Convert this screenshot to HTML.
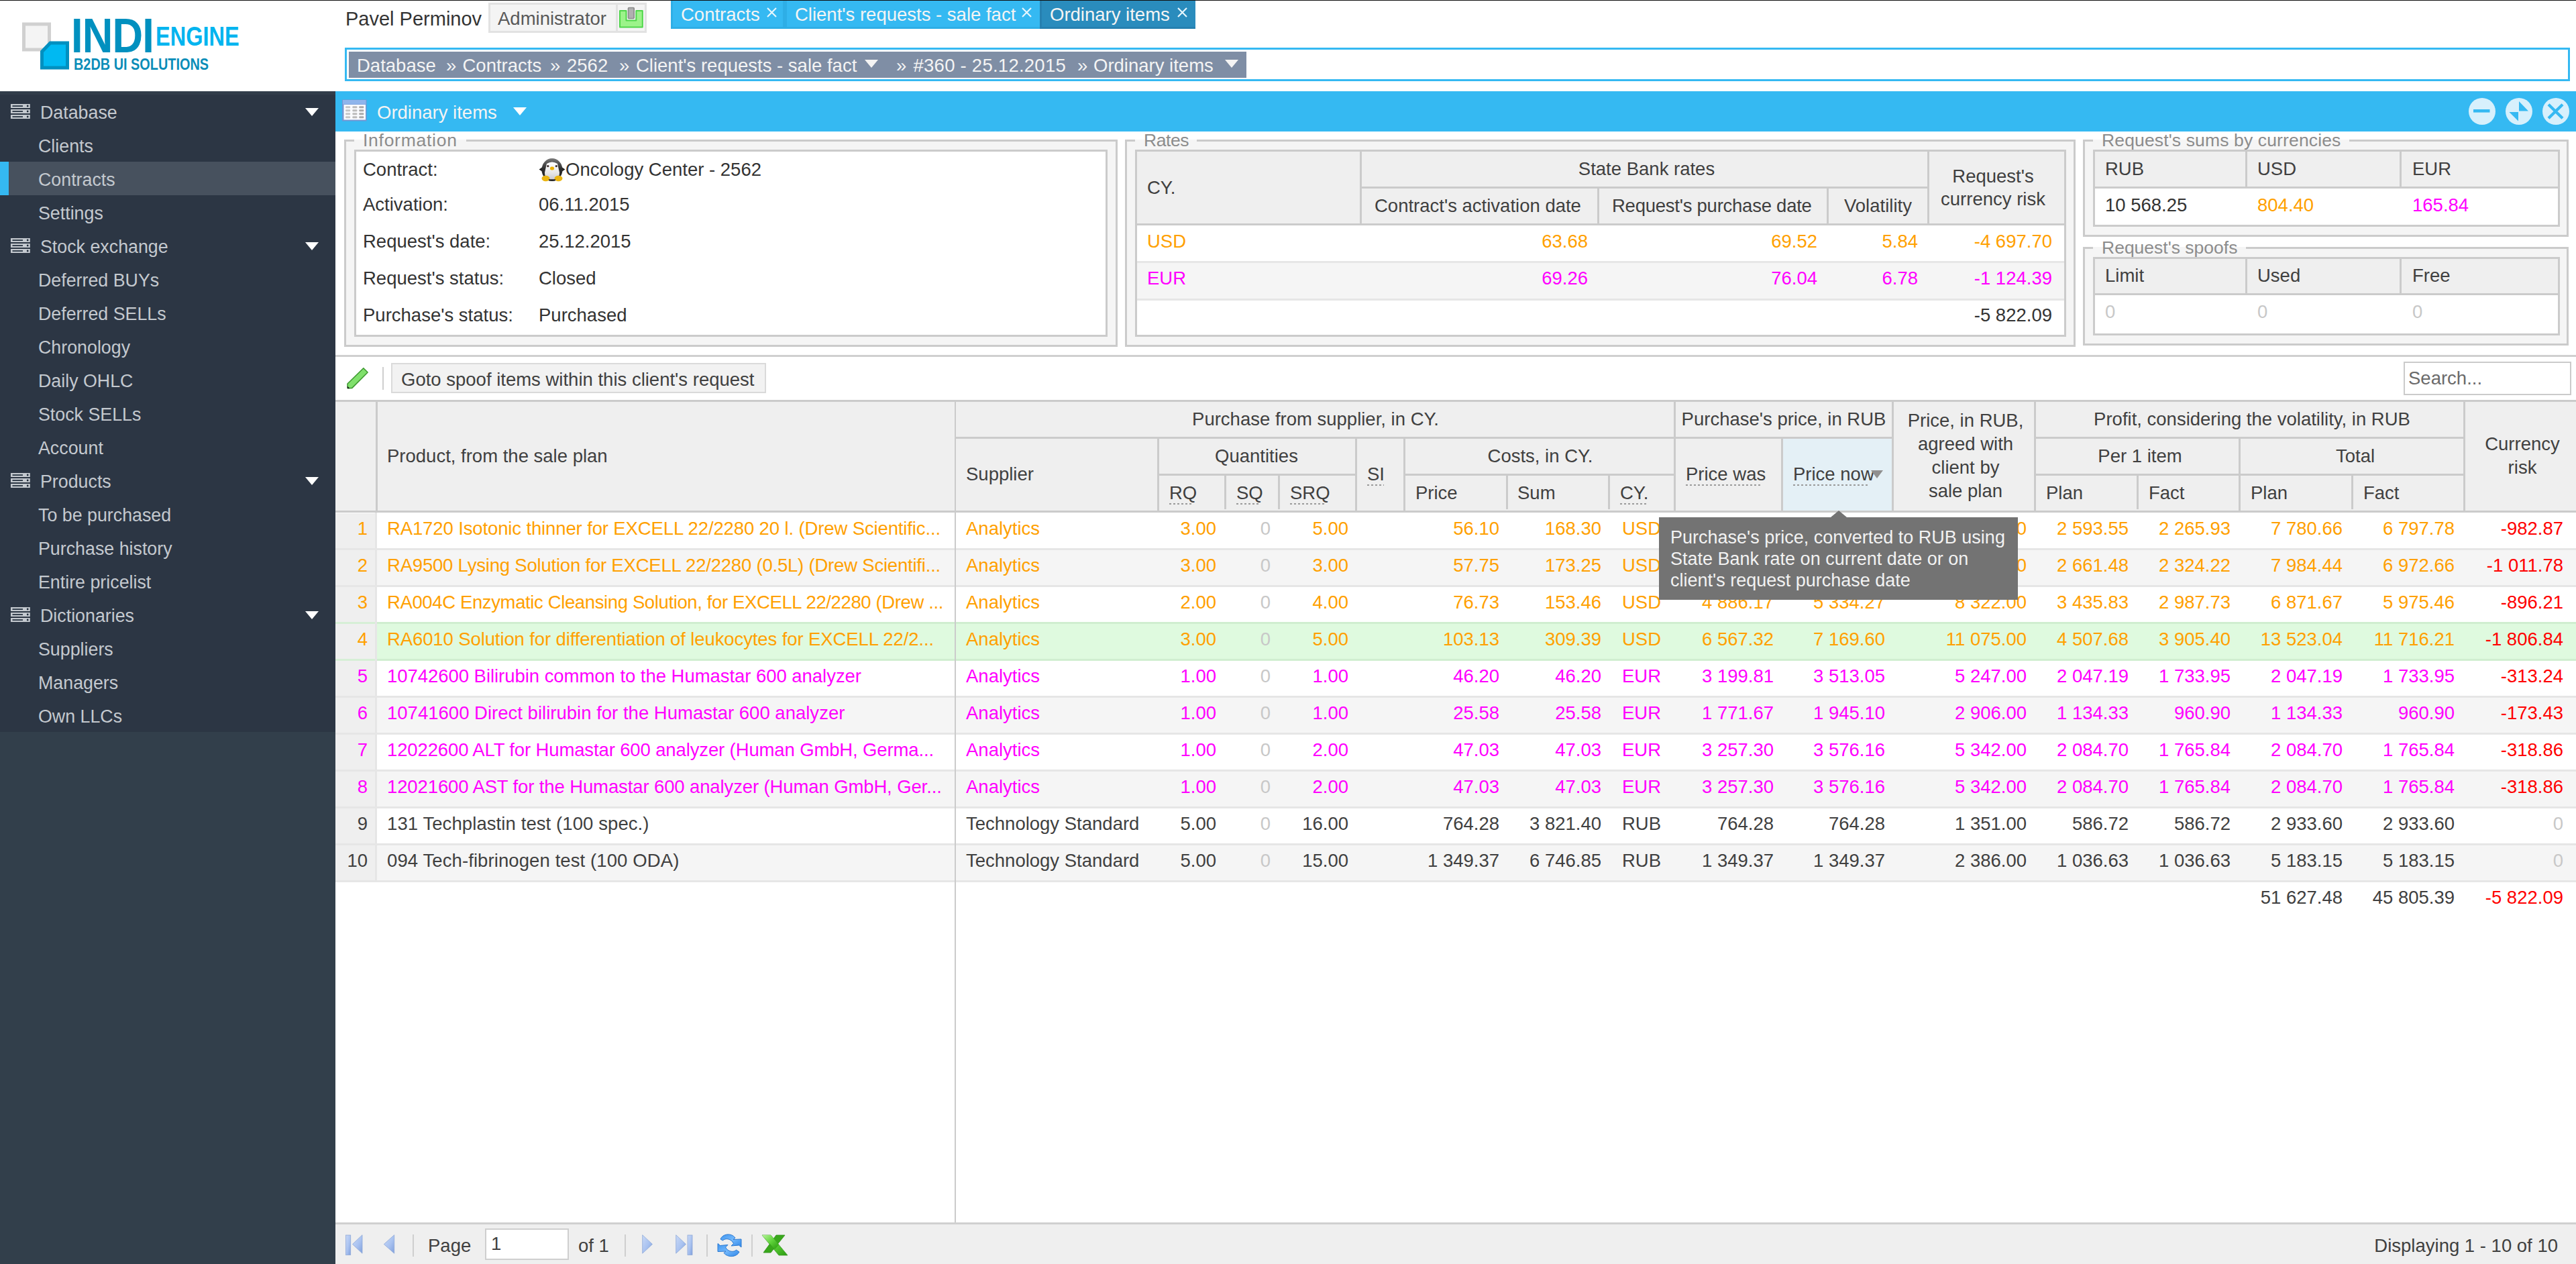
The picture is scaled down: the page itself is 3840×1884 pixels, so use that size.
<!DOCTYPE html><html><head><meta charset="utf-8"><style>
*{margin:0;padding:0;box-sizing:border-box}
html,body{width:3840px;height:1884px;overflow:hidden;background:#fff;font-family:"Liberation Sans",sans-serif;font-size:27.5px;color:#404040}
.a{position:absolute}
.t{position:absolute;white-space:nowrap}
.r{text-align:right}
.c{text-align:center}
.or{color:#ffa000}
.mg{color:#ff00ff}
.rd{color:#ff0000}
.gz{color:#c8c8c8}
</style></head><body><div class="a" style="left:0;top:0;width:3840px;height:1px;background:#111"></div><svg class="a" style="left:0;top:0" width="500" height="136" viewBox="0 0 500 136">
<rect x="35.5" y="36" width="38" height="38" fill="#f4f4f4" stroke="#d0d0d0" stroke-width="5"/>
<path d="M75 64 H100.5 V101 H62.5 V77 Z" fill="#00b9f2" stroke="#0090c0" stroke-width="5"/>
</svg><div class="t" style="left:106px;top:12px;font-size:72px;font-weight:bold;color:#0090bf;transform:scaleX(0.878);transform-origin:0 0;letter-spacing:-1px">INDI</div><div class="t" style="left:232px;top:31px;font-size:41.4px;font-weight:bold;color:#00b4ef;transform:scaleX(0.786);transform-origin:0 0">ENGINE</div><div class="t" style="left:110px;top:83px;font-size:23.5px;font-weight:bold;color:#0a8db8;transform:scaleX(0.846);transform-origin:0 0">B2DB UI SOLUTIONS</div><div class="t" style="left:515px;top:8px;font-size:29px;color:#333;line-height:40px">Pavel Perminov</div><div class="a" style="left:728px;top:4px;width:236px;height:45px;background:#f4f4f4;border:3px solid #e2e2e2"></div><div class="a" style="left:918px;top:7px;width:3px;height:40px;background:#e2e2e2"></div><div class="t" style="left:742px;top:8px;line-height:40px;color:#595959">Administrator</div><svg class="a" style="left:922px;top:9px" width="38" height="34" viewBox="0 0 38 34">
<path d="M2 7 H11.5 V21.4 H26.3 V7 H35.8 V31.5 H2 Z" fill="#9cf38a" stroke="#4fd64a" stroke-width="2" stroke-linejoin="round"/>
<rect x="14.5" y="2.5" width="8.7" height="16" rx="1" fill="#b0b0b0" stroke="#8a8a8a" stroke-width="1.6"/>
</svg><div class="a" style="left:1000px;top:1px;width:170px;height:42px;background:#35b9f2;border-left:3px solid #2eaee6;border-bottom:3px solid #2eaee6"></div><div class="t" style="left:1015px;top:2px;line-height:40px;color:#f4f4f4">Contracts</div><svg class="a" style="left:1143px;top:11px" width="15" height="15" viewBox="0 0 15 15"><path d="M1 1 L14 14 M14 1 L1 14" stroke="#e6f6fd" stroke-width="2.2"/></svg><div class="a" style="left:1170px;top:1px;width:380px;height:42px;background:#35b9f2;border-left:3px solid #2eaee6;border-bottom:3px solid #2eaee6"></div><div class="t" style="left:1185px;top:2px;line-height:40px;color:#f4f4f4">Client's requests - sale fact</div><svg class="a" style="left:1523px;top:11px" width="15" height="15" viewBox="0 0 15 15"><path d="M1 1 L14 14 M14 1 L1 14" stroke="#e6f6fd" stroke-width="2.2"/></svg><div class="a" style="left:1550px;top:1px;width:232px;height:42px;background:#2a8cbd;border-left:3px solid #2680b0;border-bottom:3px solid #2680b0"></div><div class="t" style="left:1565px;top:2px;line-height:40px;color:#f4f4f4">Ordinary items</div><svg class="a" style="left:1755px;top:11px" width="15" height="15" viewBox="0 0 15 15"><path d="M1 1 L14 14 M14 1 L1 14" stroke="#e6f6fd" stroke-width="2.2"/></svg><div class="a" style="left:1167px;top:1px;width:6px;height:42px;background:#2eaee6"></div><div class="a" style="left:514px;top:71px;width:3317px;height:50px;border:3px solid #35b9f2;background:#fff"></div><div class="a" style="left:520px;top:76.5px;width:1338px;height:39px;background:#7f8ea5"></div><div class="t" style="left:532px;top:77.5px;line-height:39px;color:#f4f4f4;">Database</div><div class="t" style="left:689.5px;top:77.5px;line-height:39px;color:#f4f4f4;">Contracts</div><div class="t" style="left:845px;top:77.5px;line-height:39px;color:#f4f4f4;">2562</div><div class="t" style="left:948px;top:77.5px;line-height:39px;color:#f4f4f4;">Client's requests - sale fact</div><div class="t" style="left:1361.5px;top:77.5px;line-height:39px;color:#f4f4f4;letter-spacing:0.25px;">#360 - 25.12.2015</div><div class="t" style="left:1630px;top:77.5px;line-height:39px;color:#f4f4f4;">Ordinary items</div><div class="t" style="left:665px;top:77.5px;line-height:39px;color:#f4f4f4">&raquo;</div><div class="t" style="left:820px;top:77.5px;line-height:39px;color:#f4f4f4">&raquo;</div><div class="t" style="left:923px;top:77.5px;line-height:39px;color:#f4f4f4">&raquo;</div><div class="t" style="left:1336px;top:77.5px;line-height:39px;color:#f4f4f4">&raquo;</div><div class="t" style="left:1606px;top:77.5px;line-height:39px;color:#f4f4f4">&raquo;</div><div class="a" style="left:1289px;top:89px;width:0;height:0;border-left:10px solid transparent;border-right:10px solid transparent;border-top:12px solid #f4f4f4"></div><div class="a" style="left:1826px;top:89px;width:0;height:0;border-left:10px solid transparent;border-right:10px solid transparent;border-top:12px solid #f4f4f4"></div><div class="a" style="left:0;top:136px;width:500px;height:1748px;background:#323f4b"></div><div class="a" style="left:0;top:136px;width:500px;height:955px;background:#2c3644"></div><div class="a" style="left:0;top:136px;width:500px;height:5px;background:#323d4a"></div><svg class="a" style="left:16px;top:155px" width="29" height="23" viewBox="0 0 29 23"><rect x="0" y="0" width="28.8" height="6" fill="#c4c9cf"/><rect x="2.5" y="2.2" width="15.5" height="1.7" fill="#1f2b39"/><circle cx="25.2" cy="3" r="1.4" fill="#1f2b39"/><rect x="0" y="8" width="28.8" height="6" fill="#c4c9cf"/><rect x="2.5" y="10.2" width="15.5" height="1.7" fill="#1f2b39"/><circle cx="25.2" cy="11" r="1.4" fill="#1f2b39"/><rect x="0" y="16" width="28.8" height="6" fill="#c4c9cf"/><rect x="2.5" y="18.2" width="15.5" height="1.7" fill="#1f2b39"/><circle cx="25.2" cy="19" r="1.4" fill="#1f2b39"/></svg><div class="t" style="left:60px;top:143px;line-height:50px;font-size:26.8px;color:#c4c9cf">Database</div><div class="a" style="left:455px;top:161px;width:0;height:0;border-left:10.5px solid transparent;border-right:10.5px solid transparent;border-top:12px solid #fff"></div><div class="t" style="left:57px;top:193px;line-height:50px;font-size:26.8px;color:#c4c9cf">Clients</div><div class="a" style="left:0;top:241px;width:500px;height:50px;background:#47515e"></div><div class="a" style="left:0;top:241px;width:13px;height:50px;background:#35b9f2"></div><div class="t" style="left:57px;top:243px;line-height:50px;font-size:26.8px;color:#c4c9cf">Contracts</div><div class="t" style="left:57px;top:293px;line-height:50px;font-size:26.8px;color:#c4c9cf">Settings</div><svg class="a" style="left:16px;top:355px" width="29" height="23" viewBox="0 0 29 23"><rect x="0" y="0" width="28.8" height="6" fill="#c4c9cf"/><rect x="2.5" y="2.2" width="15.5" height="1.7" fill="#1f2b39"/><circle cx="25.2" cy="3" r="1.4" fill="#1f2b39"/><rect x="0" y="8" width="28.8" height="6" fill="#c4c9cf"/><rect x="2.5" y="10.2" width="15.5" height="1.7" fill="#1f2b39"/><circle cx="25.2" cy="11" r="1.4" fill="#1f2b39"/><rect x="0" y="16" width="28.8" height="6" fill="#c4c9cf"/><rect x="2.5" y="18.2" width="15.5" height="1.7" fill="#1f2b39"/><circle cx="25.2" cy="19" r="1.4" fill="#1f2b39"/></svg><div class="t" style="left:60px;top:343px;line-height:50px;font-size:26.8px;color:#c4c9cf">Stock exchange</div><div class="a" style="left:455px;top:361px;width:0;height:0;border-left:10.5px solid transparent;border-right:10.5px solid transparent;border-top:12px solid #fff"></div><div class="t" style="left:57px;top:393px;line-height:50px;font-size:26.8px;color:#c4c9cf">Deferred BUYs</div><div class="t" style="left:57px;top:443px;line-height:50px;font-size:26.8px;color:#c4c9cf">Deferred SELLs</div><div class="t" style="left:57px;top:493px;line-height:50px;font-size:26.8px;color:#c4c9cf">Chronology</div><div class="t" style="left:57px;top:543px;line-height:50px;font-size:26.8px;color:#c4c9cf">Daily OHLC</div><div class="t" style="left:57px;top:593px;line-height:50px;font-size:26.8px;color:#c4c9cf">Stock SELLs</div><div class="t" style="left:57px;top:643px;line-height:50px;font-size:26.8px;color:#c4c9cf">Account</div><svg class="a" style="left:16px;top:705px" width="29" height="23" viewBox="0 0 29 23"><rect x="0" y="0" width="28.8" height="6" fill="#c4c9cf"/><rect x="2.5" y="2.2" width="15.5" height="1.7" fill="#1f2b39"/><circle cx="25.2" cy="3" r="1.4" fill="#1f2b39"/><rect x="0" y="8" width="28.8" height="6" fill="#c4c9cf"/><rect x="2.5" y="10.2" width="15.5" height="1.7" fill="#1f2b39"/><circle cx="25.2" cy="11" r="1.4" fill="#1f2b39"/><rect x="0" y="16" width="28.8" height="6" fill="#c4c9cf"/><rect x="2.5" y="18.2" width="15.5" height="1.7" fill="#1f2b39"/><circle cx="25.2" cy="19" r="1.4" fill="#1f2b39"/></svg><div class="t" style="left:60px;top:693px;line-height:50px;font-size:26.8px;color:#c4c9cf">Products</div><div class="a" style="left:455px;top:711px;width:0;height:0;border-left:10.5px solid transparent;border-right:10.5px solid transparent;border-top:12px solid #fff"></div><div class="t" style="left:57px;top:743px;line-height:50px;font-size:26.8px;color:#c4c9cf">To be purchased</div><div class="t" style="left:57px;top:793px;line-height:50px;font-size:26.8px;color:#c4c9cf">Purchase history</div><div class="t" style="left:57px;top:843px;line-height:50px;font-size:26.8px;color:#c4c9cf">Entire pricelist</div><svg class="a" style="left:16px;top:905px" width="29" height="23" viewBox="0 0 29 23"><rect x="0" y="0" width="28.8" height="6" fill="#c4c9cf"/><rect x="2.5" y="2.2" width="15.5" height="1.7" fill="#1f2b39"/><circle cx="25.2" cy="3" r="1.4" fill="#1f2b39"/><rect x="0" y="8" width="28.8" height="6" fill="#c4c9cf"/><rect x="2.5" y="10.2" width="15.5" height="1.7" fill="#1f2b39"/><circle cx="25.2" cy="11" r="1.4" fill="#1f2b39"/><rect x="0" y="16" width="28.8" height="6" fill="#c4c9cf"/><rect x="2.5" y="18.2" width="15.5" height="1.7" fill="#1f2b39"/><circle cx="25.2" cy="19" r="1.4" fill="#1f2b39"/></svg><div class="t" style="left:60px;top:893px;line-height:50px;font-size:26.8px;color:#c4c9cf">Dictionaries</div><div class="a" style="left:455px;top:911px;width:0;height:0;border-left:10.5px solid transparent;border-right:10.5px solid transparent;border-top:12px solid #fff"></div><div class="t" style="left:57px;top:943px;line-height:50px;font-size:26.8px;color:#c4c9cf">Suppliers</div><div class="t" style="left:57px;top:993px;line-height:50px;font-size:26.8px;color:#c4c9cf">Managers</div><div class="t" style="left:57px;top:1043px;line-height:50px;font-size:26.8px;color:#c4c9cf">Own LLCs</div><div class="a" style="left:500px;top:136px;width:3340px;height:60px;background:#35b9f2"></div><svg class="a" style="left:510px;top:148px" width="37" height="33" viewBox="0 0 37 33"><rect x="0" y="0.5" width="36.5" height="32" fill="#7596d2"/><rect x="1" y="1" width="34.5" height="6.5" fill="#8fb5ec"/><rect x="2.5" y="8" width="32.5" height="22.5" fill="#fafbfe"/><rect x="5" y="10.2" width="7.2" height="3" rx="1.2" fill="#c6c6c6"/><rect x="15.3" y="10.2" width="7.2" height="3" rx="1.2" fill="#bcbcbc"/><rect x="25.2" y="10.2" width="7.2" height="3" rx="1.2" fill="#aaaaaa"/><rect x="5" y="15.3" width="7.2" height="3" rx="1.2" fill="#c6c6c6"/><rect x="15.3" y="15.3" width="7.2" height="3" rx="1.2" fill="#bcbcbc"/><rect x="25.2" y="15.3" width="7.2" height="3" rx="1.2" fill="#aaaaaa"/><rect x="5" y="20.3" width="7.2" height="3" rx="1.2" fill="#c6c6c6"/><rect x="15.3" y="20.3" width="7.2" height="3" rx="1.2" fill="#bcbcbc"/><rect x="25.2" y="20.3" width="7.2" height="3" rx="1.2" fill="#aaaaaa"/><rect x="5" y="25.2" width="7.2" height="3" rx="1.2" fill="#c6c6c6"/><rect x="15.3" y="25.2" width="7.2" height="3" rx="1.2" fill="#bcbcbc"/><rect x="25.2" y="25.2" width="7.2" height="3" rx="1.2" fill="#aaaaaa"/></svg><div class="t" style="left:562px;top:138px;line-height:60px;color:#f4f4f4;font-size:27.5px">Ordinary items</div><div class="a" style="left:765px;top:160px;width:0;height:0;border-left:10px solid transparent;border-right:10px solid transparent;border-top:12px solid #fff"></div><svg class="a" style="left:3679px;top:145px" width="42" height="42" viewBox="0 0 42 42"><circle cx="21" cy="21" r="20" fill="#d7f0fc"/><rect x="8" y="18" width="24.5" height="4.6" fill="#35b9f2"/></svg><svg class="a" style="left:3734px;top:145px" width="42" height="42" viewBox="0 0 42 42"><circle cx="21" cy="21" r="20" fill="#d7f0fc"/><path d="M21 6 L21 20.5 L35 20.5 Z M6.4 21.9 L20 21.9 L20 35.5 Z" fill="#35b9f2"/></svg><svg class="a" style="left:3789px;top:145px" width="42" height="42" viewBox="0 0 42 42"><circle cx="21" cy="21" r="20" fill="#d7f0fc"/><path d="M10 10.7 L31 31.3 M31 10.7 L10 31.3" stroke="#35b9f2" stroke-width="4.2"/></svg><div class="a" style="left:513px;top:208px;width:1153px;height:309px;background:#f5f5f5;border:3px solid #cbcbcb;border-top:none"></div><div class="a" style="left:513px;top:208px;width:15px;height:3px;background:#cbcbcb"></div><div class="a" style="left:695px;top:208px;width:971px;height:3px;background:#cbcbcb"></div><div class="t" style="left:541px;top:194px;line-height:30px;font-size:26.5px;letter-spacing:0.73px;color:#8c8c8c">Information</div><div class="a" style="left:528px;top:223px;width:1123px;height:279px;background:#fff;border:3px solid #cbcbcb"></div><div class="t " style="left:541px;top:224.5px;line-height:55px;color:#333">Contract:</div><div class="t " style="left:541px;top:277.0px;line-height:55px;color:#333">Activation:</div><div class="t " style="left:803px;top:277.0px;line-height:55px;color:#333">06.11.2015</div><div class="t " style="left:541px;top:332.0px;line-height:55px;color:#333">Request's date:</div><div class="t " style="left:803px;top:332.0px;line-height:55px;color:#333">25.12.2015</div><div class="t " style="left:541px;top:387.0px;line-height:55px;color:#333">Request's status:</div><div class="t " style="left:803px;top:387.0px;line-height:55px;color:#333">Closed</div><div class="t " style="left:541px;top:441.5px;line-height:55px;color:#333">Purchase's status:</div><div class="t " style="left:803px;top:441.5px;line-height:55px;color:#333">Purchased</div><div class="t " style="left:843px;top:224.5px;line-height:55px;color:#333">Oncology Center - 2562</div><svg class="a" style="left:803px;top:235px" width="40" height="38" viewBox="0 0 40 38">
<defs><linearGradient id="pgh" x1="0" y1="0" x2="0" y2="1"><stop offset="0" stop-color="#7a7a7a"/><stop offset="0.45" stop-color="#2e2e2e"/><stop offset="1" stop-color="#222"/></linearGradient>
<linearGradient id="pgb" x1="0" y1="0" x2="0" y2="1"><stop offset="0" stop-color="#ffffff"/><stop offset="0.6" stop-color="#e6e6e6"/><stop offset="1" stop-color="#c4c4d0"/></linearGradient></defs>
<path d="M0.5 17.5 L5 14.5 L5 20.5 Z M39.5 17.5 L35 14.5 L35 20.5 Z" fill="#222"/>
<ellipse cx="20" cy="18" rx="15.5" ry="17" fill="url(#pgh)"/>
<path d="M12 9 Q20 4 28 9 L31 22 Q31 34 20 34 Q9 34 9 22 Z" fill="url(#pgb)"/>
<circle cx="13.8" cy="12.6" r="1.6" fill="#3a2a2a"/><circle cx="26.3" cy="12.6" r="1.6" fill="#3a2a2a"/>
<rect x="17" y="13.5" width="6" height="5" rx="2.2" fill="#eab000"/>
<ellipse cx="10.5" cy="31" rx="6" ry="4.2" fill="#eab512"/><ellipse cx="29.5" cy="31" rx="6" ry="4.2" fill="#eab512"/>
<rect x="15" y="32.2" width="10" height="2" fill="#2a2a2a"/>
</svg><div class="a" style="left:1677px;top:208px;width:1417px;height:309px;background:#f5f5f5;border:3px solid #cbcbcb;border-top:none"></div><div class="a" style="left:1677px;top:208px;width:15px;height:3px;background:#cbcbcb"></div><div class="a" style="left:1784px;top:208px;width:1310px;height:3px;background:#cbcbcb"></div><div class="t" style="left:1705px;top:194px;line-height:30px;font-size:26.5px;letter-spacing:-0.44px;color:#8c8c8c">Rates</div><div class="a" style="left:1692px;top:223px;width:1388px;height:279px;background:#fff;border:3px solid #cbcbcb"></div><div class="a" style="left:1695px;top:226px;width:1382px;height:107px;background:#efefef"></div><div class="a" style="left:1695px;top:333px;width:1382px;height:3px;background:#cbcbcb"></div><div class="a" style="left:2027px;top:226px;width:3px;height:107px;background:#cbcbcb"></div><div class="a" style="left:2030px;top:278px;width:843px;height:3px;background:#cbcbcb"></div><div class="a" style="left:2381px;top:281px;width:3px;height:52px;background:#cbcbcb"></div><div class="a" style="left:2723px;top:281px;width:3px;height:52px;background:#cbcbcb"></div><div class="a" style="left:2873px;top:226px;width:3px;height:107px;background:#cbcbcb"></div><div class="a" style="left:1695px;top:336px;width:1382px;height:53px;background:#fff"></div><div class="a" style="left:1695px;top:389px;width:1382px;height:3px;background:#e6e6e6"></div><div class="a" style="left:1695px;top:392px;width:1382px;height:53px;background:#f5f5f5"></div><div class="a" style="left:1695px;top:445px;width:1382px;height:3px;background:#e6e6e6"></div><div class="t " style="left:1710px;top:251.5px;line-height:55px;">CY.</div><div class="t c " style="left:2054.5px;width:800px;top:223.5px;line-height:55px;">State Bank rates</div><div class="t " style="left:2049px;top:278.5px;line-height:55px;">Contract's activation date</div><div class="t " style="left:2403px;top:278.5px;line-height:55px;letter-spacing:-0.25px">Request's purchase date</div><div class="t " style="left:2749px;top:278.5px;line-height:55px;">Volatility</div><div class="t c " style="left:2571px;width:800px;top:234.5px;line-height:55px;">Request's</div><div class="t c " style="left:2571px;width:800px;top:268.5px;line-height:55px;">currency risk</div><div class="t or" style="left:1710px;top:332.0px;line-height:55px;">USD</div><div class="t r or" style="right:1473px;top:332.0px;line-height:55px;">63.68</div><div class="t r or" style="right:1131px;top:332.0px;line-height:55px;">69.52</div><div class="t r or" style="right:981px;top:332.0px;line-height:55px;">5.84</div><div class="t r or" style="right:781px;top:332.0px;line-height:55px;">-4 697.70</div><div class="t mg" style="left:1710px;top:387.0px;line-height:55px;">EUR</div><div class="t r mg" style="right:1473px;top:387.0px;line-height:55px;">69.26</div><div class="t r mg" style="right:1131px;top:387.0px;line-height:55px;">76.04</div><div class="t r mg" style="right:981px;top:387.0px;line-height:55px;">6.78</div><div class="t r mg" style="right:781px;top:387.0px;line-height:55px;">-1 124.39</div><div class="t r " style="right:781px;top:442.0px;line-height:55px;color:#333">-5 822.09</div><div class="a" style="left:3105px;top:208px;width:724px;height:145px;background:#f5f5f5;border:3px solid #cbcbcb;border-top:none"></div><div class="a" style="left:3105px;top:208px;width:15px;height:3px;background:#cbcbcb"></div><div class="a" style="left:3502px;top:208px;width:327px;height:3px;background:#cbcbcb"></div><div class="t" style="left:3133px;top:194px;line-height:30px;font-size:26.5px;letter-spacing:0.136px;color:#8c8c8c">Request's sums by currencies</div><div class="a" style="left:3120px;top:223px;width:696px;height:115px;background:#fff;border:3px solid #cbcbcb"></div><div class="a" style="left:3123px;top:226px;width:690px;height:52px;background:#efefef"></div><div class="a" style="left:3123px;top:278px;width:690px;height:3px;background:#cbcbcb"></div><div class="a" style="left:3347px;top:226px;width:3px;height:52px;background:#cbcbcb"></div><div class="a" style="left:3577px;top:226px;width:3px;height:52px;background:#cbcbcb"></div><div class="t " style="left:3138px;top:223.5px;line-height:55px;">RUB</div><div class="t " style="left:3365px;top:223.5px;line-height:55px;">USD</div><div class="t " style="left:3596px;top:223.5px;line-height:55px;">EUR</div><div class="t " style="left:3138px;top:278.0px;line-height:55px;color:#333">10 568.25</div><div class="t or" style="left:3365px;top:278.0px;line-height:55px;">804.40</div><div class="t mg" style="left:3596px;top:278.0px;line-height:55px;">165.84</div><div class="a" style="left:3105px;top:368px;width:724px;height:147px;background:#f5f5f5;border:3px solid #cbcbcb;border-top:none"></div><div class="a" style="left:3105px;top:368px;width:15px;height:3px;background:#cbcbcb"></div><div class="a" style="left:3348px;top:368px;width:481px;height:3px;background:#cbcbcb"></div><div class="t" style="left:3133px;top:354px;line-height:30px;font-size:26.5px;letter-spacing:0px;color:#8c8c8c">Request's spoofs</div><div class="a" style="left:3120px;top:383px;width:696px;height:117px;background:#fff;border:3px solid #cbcbcb"></div><div class="a" style="left:3123px;top:386px;width:690px;height:51px;background:#efefef"></div><div class="a" style="left:3123px;top:437px;width:690px;height:3px;background:#cbcbcb"></div><div class="a" style="left:3347px;top:386px;width:3px;height:51px;background:#cbcbcb"></div><div class="a" style="left:3577px;top:386px;width:3px;height:51px;background:#cbcbcb"></div><div class="t " style="left:3138px;top:383.0px;line-height:55px;">Limit</div><div class="t " style="left:3365px;top:383.0px;line-height:55px;">Used</div><div class="t " style="left:3596px;top:383.0px;line-height:55px;">Free</div><div class="t gz" style="left:3138px;top:436.5px;line-height:55px;">0</div><div class="t gz" style="left:3365px;top:436.5px;line-height:55px;">0</div><div class="t gz" style="left:3596px;top:436.5px;line-height:55px;">0</div><div class="a" style="left:500px;top:529px;width:3340px;height:3px;background:#d0d0d0"></div><svg class="a" style="left:514px;top:546px" width="38" height="36" viewBox="0 0 38 36">
<path d="M4 26 L27.8 2.7 L34.1 9 L10.8 32.4 L4.3 32.6 Z" fill="#80e06c" stroke="#3e9a30" stroke-width="1.6" stroke-linejoin="round"/>
<path d="M3.8 29.5 L3.8 33 L7.3 33 Z" fill="#111"/>
</svg><div class="a" style="left:570px;top:547px;width:2px;height:34px;background:#cfcfcf"></div><div class="a" style="left:583px;top:541px;width:559px;height:45px;background:#f2f2f2;border:2px solid #dadada"></div><div class="t " style="left:598px;top:537.5px;line-height:55px;color:#404040">Goto spoof items within this client's request</div><div class="a" style="left:3583px;top:539px;width:250px;height:50px;background:#fff;border:2px solid #cbcbcb"></div><div class="t " style="left:3590px;top:535.5px;line-height:55px;color:#6b6b6b">Search...</div><div class="a" style="left:500px;top:596px;width:3340px;height:168px;background:#efefef"></div><div class="a" style="left:500px;top:596px;width:3340px;height:3px;background:#cbcbcb"></div><div class="a" style="left:500px;top:761px;width:3340px;height:3px;background:#cbcbcb"></div><div class="a" style="left:1424px;top:651px;width:1071px;height:3px;background:#cbcbcb"></div><div class="a" style="left:2495px;top:651px;width:325px;height:3px;background:#cbcbcb"></div><div class="a" style="left:3032px;top:651px;width:640px;height:3px;background:#cbcbcb"></div><div class="a" style="left:1725px;top:706px;width:295px;height:3px;background:#cbcbcb"></div><div class="a" style="left:2092px;top:706px;width:403px;height:3px;background:#cbcbcb"></div><div class="a" style="left:3032px;top:706px;width:640px;height:3px;background:#cbcbcb"></div><div class="a" style="left:2658px;top:654px;width:162px;height:107px;background:#e4f0f6"></div><div class="a" style="left:560px;top:596px;width:3px;height:165px;background:#cbcbcb"></div><div class="a" style="left:2495px;top:596px;width:3px;height:165px;background:#cbcbcb"></div><div class="a" style="left:2820px;top:596px;width:3px;height:165px;background:#cbcbcb"></div><div class="a" style="left:3032px;top:596px;width:3px;height:165px;background:#cbcbcb"></div><div class="a" style="left:3672px;top:596px;width:3px;height:165px;background:#cbcbcb"></div><div class="a" style="left:1423px;top:596px;width:2px;height:165px;background:#cbcbcb"></div><div class="a" style="left:1725px;top:651px;width:3px;height:110px;background:#cbcbcb"></div><div class="a" style="left:2020px;top:651px;width:3px;height:110px;background:#cbcbcb"></div><div class="a" style="left:2092px;top:651px;width:3px;height:110px;background:#cbcbcb"></div><div class="a" style="left:2655px;top:651px;width:3px;height:110px;background:#cbcbcb"></div><div class="a" style="left:3337px;top:651px;width:3px;height:110px;background:#cbcbcb"></div><div class="a" style="left:1825px;top:706px;width:3px;height:53px;background:#cbcbcb"></div><div class="a" style="left:1905px;top:706px;width:3px;height:53px;background:#cbcbcb"></div><div class="a" style="left:2245px;top:706px;width:3px;height:53px;background:#cbcbcb"></div><div class="a" style="left:2397px;top:706px;width:3px;height:53px;background:#cbcbcb"></div><div class="a" style="left:3185px;top:706px;width:3px;height:53px;background:#cbcbcb"></div><div class="a" style="left:3505px;top:706px;width:3px;height:53px;background:#cbcbcb"></div><div class="t " style="left:577px;top:651.5px;line-height:55px;">Product, from the sale plan</div><div class="t c " style="left:1561px;width:800px;top:596.5px;line-height:55px;">Purchase from supplier, in CY.</div><div class="t " style="left:1440px;top:679.0px;line-height:55px;">Supplier</div><div class="t c " style="left:1473px;width:800px;top:651.5px;line-height:55px;">Quantities</div><div class="t " style="left:2038px;top:679.0px;line-height:55px;">SI</div><div class="t c " style="left:1896px;width:800px;top:651.5px;line-height:55px;">Costs, in CY.</div><div class="t " style="left:1743px;top:707.0px;line-height:55px;">RQ</div><div class="t " style="left:1843px;top:707.0px;line-height:55px;">SQ</div><div class="t " style="left:1923px;top:707.0px;line-height:55px;">SRQ</div><div class="t " style="left:2110px;top:707.0px;line-height:55px;">Price</div><div class="t " style="left:2262px;top:707.0px;line-height:55px;">Sum</div><div class="t " style="left:2415px;top:707.0px;line-height:55px;">CY.</div><div class="t c " style="left:2259px;width:800px;top:596.5px;line-height:55px;">Purchase's price, in RUB</div><div class="t " style="left:2513px;top:678.5px;line-height:55px;">Price was</div><div class="t " style="left:2673px;top:678.5px;line-height:55px;">Price now</div><div class="a" style="left:2789px;top:701px;width:0;height:0;border-left:9px solid transparent;border-right:9px solid transparent;border-top:12px solid #909090"></div><div class="t c " style="left:2530px;width:800px;top:598.5px;line-height:55px;">Price, in RUB,</div><div class="t c " style="left:2530px;width:800px;top:633.5px;line-height:55px;">agreed with</div><div class="t c " style="left:2530px;width:800px;top:668.5px;line-height:55px;">client by</div><div class="t c " style="left:2530px;width:800px;top:703.5px;line-height:55px;">sale plan</div><div class="t c " style="left:2957px;width:800px;top:596.5px;line-height:55px;">Profit, considering the volatility, in RUB</div><div class="t c " style="left:2790px;width:800px;top:651.5px;line-height:55px;">Per 1 item</div><div class="t c " style="left:3111px;width:800px;top:651.5px;line-height:55px;">Total</div><div class="t " style="left:3050px;top:706.5px;line-height:55px;">Plan</div><div class="t " style="left:3203px;top:706.5px;line-height:55px;">Fact</div><div class="t " style="left:3355px;top:706.5px;line-height:55px;">Plan</div><div class="t " style="left:3523px;top:706.5px;line-height:55px;">Fact</div><div class="t c " style="left:3360px;width:800px;top:633.5px;line-height:55px;">Currency</div><div class="t c " style="left:3360px;width:800px;top:668.5px;line-height:55px;">risk</div><div class="a" style="left:1743px;top:750px;width:35px;height:2px;background:repeating-linear-gradient(90deg,#9a9a9a 0 3px,transparent 3px 6px)"></div><div class="a" style="left:1843px;top:750px;width:34px;height:2px;background:repeating-linear-gradient(90deg,#9a9a9a 0 3px,transparent 3px 6px)"></div><div class="a" style="left:1923px;top:750px;width:51px;height:2px;background:repeating-linear-gradient(90deg,#9a9a9a 0 3px,transparent 3px 6px)"></div><div class="a" style="left:2038px;top:722px;width:25px;height:2px;background:repeating-linear-gradient(90deg,#9a9a9a 0 3px,transparent 3px 6px)"></div><div class="a" style="left:2415px;top:750px;width:42px;height:2px;background:repeating-linear-gradient(90deg,#9a9a9a 0 3px,transparent 3px 6px)"></div><div class="a" style="left:2513px;top:722px;width:114px;height:2px;background:repeating-linear-gradient(90deg,#9a9a9a 0 3px,transparent 3px 6px)"></div><div class="a" style="left:2673px;top:722px;width:114px;height:2px;background:repeating-linear-gradient(90deg,#9a9a9a 0 3px,transparent 3px 6px)"></div><div class="a" style="left:562px;top:765px;width:3278px;height:55px;background:#ffffff"></div><div class="a" style="left:500px;top:765px;width:62px;height:55px;background:#efefef"></div><div class="a" style="left:562px;top:817px;width:3278px;height:3px;background:#e6e6e6"></div><div class="a" style="left:500px;top:817px;width:62px;height:3px;background:#e6e6e6"></div><div class="t r or" style="right:3292px;top:759.5px;line-height:55px;">1</div><div class="t or" style="left:577px;top:759.5px;line-height:55px;;letter-spacing:-0.126px">RA1720 Isotonic thinner for EXCELL 22/2280 20 l. (Drew Scientific...</div><div class="t or" style="left:1440px;top:759.5px;line-height:55px;">Analytics</div><div class="t r or" style="right:2027px;top:759.5px;line-height:55px;">3.00</div><div class="t r gz" style="right:1946px;top:759.5px;line-height:55px;">0</div><div class="t r or" style="right:1830px;top:759.5px;line-height:55px;">5.00</div><div class="t r or" style="right:1605px;top:759.5px;line-height:55px;">56.10</div><div class="t r or" style="right:1453px;top:759.5px;line-height:55px;">168.30</div><div class="t or" style="left:2418px;top:759.5px;line-height:55px;">USD</div><div class="t r or" style="right:1196px;top:759.5px;line-height:55px;">4 147.32</div><div class="t r or" style="right:1030px;top:759.5px;line-height:55px;">4 528.14</div><div class="t r or" style="right:819px;top:759.5px;line-height:55px;">7 140.00</div><div class="t r or" style="right:667px;top:759.5px;line-height:55px;">2 593.55</div><div class="t r or" style="right:515px;top:759.5px;line-height:55px;">2 265.93</div><div class="t r or" style="right:348px;top:759.5px;line-height:55px;">7 780.66</div><div class="t r or" style="right:181px;top:759.5px;line-height:55px;">6 797.78</div><div class="t r rd" style="right:19px;top:759.5px;line-height:55px;">-982.87</div><div class="a" style="left:562px;top:820px;width:3278px;height:55px;background:#f5f5f5"></div><div class="a" style="left:500px;top:820px;width:62px;height:55px;background:#efefef"></div><div class="a" style="left:562px;top:872px;width:3278px;height:3px;background:#e6e6e6"></div><div class="a" style="left:500px;top:872px;width:62px;height:3px;background:#e6e6e6"></div><div class="t r or" style="right:3292px;top:814.5px;line-height:55px;">2</div><div class="t or" style="left:577px;top:814.5px;line-height:55px;;letter-spacing:-0.204px">RA9500 Lysing Solution for EXCELL 22/2280 (0.5L) (Drew Scientifi...</div><div class="t or" style="left:1440px;top:814.5px;line-height:55px;">Analytics</div><div class="t r or" style="right:2027px;top:814.5px;line-height:55px;">3.00</div><div class="t r gz" style="right:1946px;top:814.5px;line-height:55px;">0</div><div class="t r or" style="right:1830px;top:814.5px;line-height:55px;">3.00</div><div class="t r or" style="right:1605px;top:814.5px;line-height:55px;">57.75</div><div class="t r or" style="right:1453px;top:814.5px;line-height:55px;">173.25</div><div class="t or" style="left:2418px;top:814.5px;line-height:55px;">USD</div><div class="t r or" style="right:1196px;top:814.5px;line-height:55px;">4 254.96</div><div class="t r or" style="right:1030px;top:814.5px;line-height:55px;">4 645.78</div><div class="t r or" style="right:819px;top:814.5px;line-height:55px;">7 310.00</div><div class="t r or" style="right:667px;top:814.5px;line-height:55px;">2 661.48</div><div class="t r or" style="right:515px;top:814.5px;line-height:55px;">2 324.22</div><div class="t r or" style="right:348px;top:814.5px;line-height:55px;">7 984.44</div><div class="t r or" style="right:181px;top:814.5px;line-height:55px;">6 972.66</div><div class="t r rd" style="right:19px;top:814.5px;line-height:55px;">-1 011.78</div><div class="a" style="left:562px;top:875px;width:3278px;height:55px;background:#ffffff"></div><div class="a" style="left:500px;top:875px;width:62px;height:55px;background:#efefef"></div><div class="a" style="left:562px;top:927px;width:3278px;height:3px;background:#e6e6e6"></div><div class="a" style="left:500px;top:927px;width:62px;height:3px;background:#e6e6e6"></div><div class="t r or" style="right:3292px;top:869.5px;line-height:55px;">3</div><div class="t or" style="left:577px;top:869.5px;line-height:55px;;letter-spacing:-0.375px">RA004C Enzymatic Cleansing Solution, for EXCELL 22/2280 (Drew ...</div><div class="t or" style="left:1440px;top:869.5px;line-height:55px;">Analytics</div><div class="t r or" style="right:2027px;top:869.5px;line-height:55px;">2.00</div><div class="t r gz" style="right:1946px;top:869.5px;line-height:55px;">0</div><div class="t r or" style="right:1830px;top:869.5px;line-height:55px;">4.00</div><div class="t r or" style="right:1605px;top:869.5px;line-height:55px;">76.73</div><div class="t r or" style="right:1453px;top:869.5px;line-height:55px;">153.46</div><div class="t or" style="left:2418px;top:869.5px;line-height:55px;">USD</div><div class="t r or" style="right:1196px;top:869.5px;line-height:55px;">4 886.17</div><div class="t r or" style="right:1030px;top:869.5px;line-height:55px;">5 334.27</div><div class="t r or" style="right:819px;top:869.5px;line-height:55px;">8 322.00</div><div class="t r or" style="right:667px;top:869.5px;line-height:55px;">3 435.83</div><div class="t r or" style="right:515px;top:869.5px;line-height:55px;">2 987.73</div><div class="t r or" style="right:348px;top:869.5px;line-height:55px;">6 871.67</div><div class="t r or" style="right:181px;top:869.5px;line-height:55px;">5 975.46</div><div class="t r rd" style="right:19px;top:869.5px;line-height:55px;">-896.21</div><div class="a" style="left:562px;top:930px;width:3278px;height:55px;background:#dffadf"></div><div class="a" style="left:500px;top:930px;width:62px;height:55px;background:#efefef"></div><div class="a" style="left:562px;top:982px;width:3278px;height:3px;background:#d0eed0"></div><div class="a" style="left:500px;top:982px;width:62px;height:3px;background:#d6efd6"></div><div class="a" style="left:562px;top:927px;width:3278px;height:3px;background:#d0eed0"></div><div class="a" style="left:500px;top:927px;width:62px;height:3px;background:#d6efd6"></div><div class="t r or" style="right:3292px;top:924.5px;line-height:55px;">4</div><div class="t or" style="left:577px;top:924.5px;line-height:55px;;letter-spacing:-0.109px">RA6010 Solution for differentiation of leukocytes for EXCELL 22/2...</div><div class="t or" style="left:1440px;top:924.5px;line-height:55px;">Analytics</div><div class="t r or" style="right:2027px;top:924.5px;line-height:55px;">3.00</div><div class="t r gz" style="right:1946px;top:924.5px;line-height:55px;">0</div><div class="t r or" style="right:1830px;top:924.5px;line-height:55px;">5.00</div><div class="t r or" style="right:1605px;top:924.5px;line-height:55px;">103.13</div><div class="t r or" style="right:1453px;top:924.5px;line-height:55px;">309.39</div><div class="t or" style="left:2418px;top:924.5px;line-height:55px;">USD</div><div class="t r or" style="right:1196px;top:924.5px;line-height:55px;">6 567.32</div><div class="t r or" style="right:1030px;top:924.5px;line-height:55px;">7 169.60</div><div class="t r or" style="right:819px;top:924.5px;line-height:55px;">11 075.00</div><div class="t r or" style="right:667px;top:924.5px;line-height:55px;">4 507.68</div><div class="t r or" style="right:515px;top:924.5px;line-height:55px;">3 905.40</div><div class="t r or" style="right:348px;top:924.5px;line-height:55px;">13 523.04</div><div class="t r or" style="right:181px;top:924.5px;line-height:55px;">11 716.21</div><div class="t r rd" style="right:19px;top:924.5px;line-height:55px;">-1 806.84</div><div class="a" style="left:562px;top:985px;width:3278px;height:55px;background:#ffffff"></div><div class="a" style="left:500px;top:985px;width:62px;height:55px;background:#efefef"></div><div class="a" style="left:562px;top:1037px;width:3278px;height:3px;background:#e6e6e6"></div><div class="a" style="left:500px;top:1037px;width:62px;height:3px;background:#e6e6e6"></div><div class="t r mg" style="right:3292px;top:979.5px;line-height:55px;">5</div><div class="t mg" style="left:577px;top:979.5px;line-height:55px;;letter-spacing:-0.043px">10742600 Bilirubin common to the Humastar 600 analyzer</div><div class="t mg" style="left:1440px;top:979.5px;line-height:55px;">Analytics</div><div class="t r mg" style="right:2027px;top:979.5px;line-height:55px;">1.00</div><div class="t r gz" style="right:1946px;top:979.5px;line-height:55px;">0</div><div class="t r mg" style="right:1830px;top:979.5px;line-height:55px;">1.00</div><div class="t r mg" style="right:1605px;top:979.5px;line-height:55px;">46.20</div><div class="t r mg" style="right:1453px;top:979.5px;line-height:55px;">46.20</div><div class="t mg" style="left:2418px;top:979.5px;line-height:55px;">EUR</div><div class="t r mg" style="right:1196px;top:979.5px;line-height:55px;">3 199.81</div><div class="t r mg" style="right:1030px;top:979.5px;line-height:55px;">3 513.05</div><div class="t r mg" style="right:819px;top:979.5px;line-height:55px;">5 247.00</div><div class="t r mg" style="right:667px;top:979.5px;line-height:55px;">2 047.19</div><div class="t r mg" style="right:515px;top:979.5px;line-height:55px;">1 733.95</div><div class="t r mg" style="right:348px;top:979.5px;line-height:55px;">2 047.19</div><div class="t r mg" style="right:181px;top:979.5px;line-height:55px;">1 733.95</div><div class="t r rd" style="right:19px;top:979.5px;line-height:55px;">-313.24</div><div class="a" style="left:562px;top:1040px;width:3278px;height:55px;background:#f5f5f5"></div><div class="a" style="left:500px;top:1040px;width:62px;height:55px;background:#efefef"></div><div class="a" style="left:562px;top:1092px;width:3278px;height:3px;background:#e6e6e6"></div><div class="a" style="left:500px;top:1092px;width:62px;height:3px;background:#e6e6e6"></div><div class="t r mg" style="right:3292px;top:1034.5px;line-height:55px;">6</div><div class="t mg" style="left:577px;top:1034.5px;line-height:55px;;letter-spacing:0.011px">10741600 Direct bilirubin for the Humastar 600 analyzer</div><div class="t mg" style="left:1440px;top:1034.5px;line-height:55px;">Analytics</div><div class="t r mg" style="right:2027px;top:1034.5px;line-height:55px;">1.00</div><div class="t r gz" style="right:1946px;top:1034.5px;line-height:55px;">0</div><div class="t r mg" style="right:1830px;top:1034.5px;line-height:55px;">1.00</div><div class="t r mg" style="right:1605px;top:1034.5px;line-height:55px;">25.58</div><div class="t r mg" style="right:1453px;top:1034.5px;line-height:55px;">25.58</div><div class="t mg" style="left:2418px;top:1034.5px;line-height:55px;">EUR</div><div class="t r mg" style="right:1196px;top:1034.5px;line-height:55px;">1 771.67</div><div class="t r mg" style="right:1030px;top:1034.5px;line-height:55px;">1 945.10</div><div class="t r mg" style="right:819px;top:1034.5px;line-height:55px;">2 906.00</div><div class="t r mg" style="right:667px;top:1034.5px;line-height:55px;">1 134.33</div><div class="t r mg" style="right:515px;top:1034.5px;line-height:55px;">960.90</div><div class="t r mg" style="right:348px;top:1034.5px;line-height:55px;">1 134.33</div><div class="t r mg" style="right:181px;top:1034.5px;line-height:55px;">960.90</div><div class="t r rd" style="right:19px;top:1034.5px;line-height:55px;">-173.43</div><div class="a" style="left:562px;top:1095px;width:3278px;height:55px;background:#ffffff"></div><div class="a" style="left:500px;top:1095px;width:62px;height:55px;background:#efefef"></div><div class="a" style="left:562px;top:1147px;width:3278px;height:3px;background:#e6e6e6"></div><div class="a" style="left:500px;top:1147px;width:62px;height:3px;background:#e6e6e6"></div><div class="t r mg" style="right:3292px;top:1089.5px;line-height:55px;">7</div><div class="t mg" style="left:577px;top:1089.5px;line-height:55px;;letter-spacing:-0.13px">12022600 ALT for Humastar 600 analyzer (Human GmbH, Germa...</div><div class="t mg" style="left:1440px;top:1089.5px;line-height:55px;">Analytics</div><div class="t r mg" style="right:2027px;top:1089.5px;line-height:55px;">1.00</div><div class="t r gz" style="right:1946px;top:1089.5px;line-height:55px;">0</div><div class="t r mg" style="right:1830px;top:1089.5px;line-height:55px;">2.00</div><div class="t r mg" style="right:1605px;top:1089.5px;line-height:55px;">47.03</div><div class="t r mg" style="right:1453px;top:1089.5px;line-height:55px;">47.03</div><div class="t mg" style="left:2418px;top:1089.5px;line-height:55px;">EUR</div><div class="t r mg" style="right:1196px;top:1089.5px;line-height:55px;">3 257.30</div><div class="t r mg" style="right:1030px;top:1089.5px;line-height:55px;">3 576.16</div><div class="t r mg" style="right:819px;top:1089.5px;line-height:55px;">5 342.00</div><div class="t r mg" style="right:667px;top:1089.5px;line-height:55px;">2 084.70</div><div class="t r mg" style="right:515px;top:1089.5px;line-height:55px;">1 765.84</div><div class="t r mg" style="right:348px;top:1089.5px;line-height:55px;">2 084.70</div><div class="t r mg" style="right:181px;top:1089.5px;line-height:55px;">1 765.84</div><div class="t r rd" style="right:19px;top:1089.5px;line-height:55px;">-318.86</div><div class="a" style="left:562px;top:1150px;width:3278px;height:55px;background:#f5f5f5"></div><div class="a" style="left:500px;top:1150px;width:62px;height:55px;background:#efefef"></div><div class="a" style="left:562px;top:1202px;width:3278px;height:3px;background:#e6e6e6"></div><div class="a" style="left:500px;top:1202px;width:62px;height:3px;background:#e6e6e6"></div><div class="t r mg" style="right:3292px;top:1144.5px;line-height:55px;">8</div><div class="t mg" style="left:577px;top:1144.5px;line-height:55px;;letter-spacing:-0.119px">12021600 AST for the Humastar 600 analyzer (Human GmbH, Ger...</div><div class="t mg" style="left:1440px;top:1144.5px;line-height:55px;">Analytics</div><div class="t r mg" style="right:2027px;top:1144.5px;line-height:55px;">1.00</div><div class="t r gz" style="right:1946px;top:1144.5px;line-height:55px;">0</div><div class="t r mg" style="right:1830px;top:1144.5px;line-height:55px;">2.00</div><div class="t r mg" style="right:1605px;top:1144.5px;line-height:55px;">47.03</div><div class="t r mg" style="right:1453px;top:1144.5px;line-height:55px;">47.03</div><div class="t mg" style="left:2418px;top:1144.5px;line-height:55px;">EUR</div><div class="t r mg" style="right:1196px;top:1144.5px;line-height:55px;">3 257.30</div><div class="t r mg" style="right:1030px;top:1144.5px;line-height:55px;">3 576.16</div><div class="t r mg" style="right:819px;top:1144.5px;line-height:55px;">5 342.00</div><div class="t r mg" style="right:667px;top:1144.5px;line-height:55px;">2 084.70</div><div class="t r mg" style="right:515px;top:1144.5px;line-height:55px;">1 765.84</div><div class="t r mg" style="right:348px;top:1144.5px;line-height:55px;">2 084.70</div><div class="t r mg" style="right:181px;top:1144.5px;line-height:55px;">1 765.84</div><div class="t r rd" style="right:19px;top:1144.5px;line-height:55px;">-318.86</div><div class="a" style="left:562px;top:1205px;width:3278px;height:55px;background:#ffffff"></div><div class="a" style="left:500px;top:1205px;width:62px;height:55px;background:#efefef"></div><div class="a" style="left:562px;top:1257px;width:3278px;height:3px;background:#e6e6e6"></div><div class="a" style="left:500px;top:1257px;width:62px;height:3px;background:#e6e6e6"></div><div class="t r " style="right:3292px;top:1199.5px;line-height:55px;color:#404040">9</div><div class="t " style="left:577px;top:1199.5px;line-height:55px;color:#404040;letter-spacing:0.088px">131 Techplastin test (100 spec.)</div><div class="t " style="left:1440px;top:1199.5px;line-height:55px;color:#404040">Technology Standard</div><div class="t r " style="right:2027px;top:1199.5px;line-height:55px;color:#404040">5.00</div><div class="t r gz" style="right:1946px;top:1199.5px;line-height:55px;">0</div><div class="t r " style="right:1830px;top:1199.5px;line-height:55px;color:#404040">16.00</div><div class="t r " style="right:1605px;top:1199.5px;line-height:55px;color:#404040">764.28</div><div class="t r " style="right:1453px;top:1199.5px;line-height:55px;color:#404040">3 821.40</div><div class="t " style="left:2418px;top:1199.5px;line-height:55px;color:#404040">RUB</div><div class="t r " style="right:1196px;top:1199.5px;line-height:55px;color:#404040">764.28</div><div class="t r " style="right:1030px;top:1199.5px;line-height:55px;color:#404040">764.28</div><div class="t r " style="right:819px;top:1199.5px;line-height:55px;color:#404040">1 351.00</div><div class="t r " style="right:667px;top:1199.5px;line-height:55px;color:#404040">586.72</div><div class="t r " style="right:515px;top:1199.5px;line-height:55px;color:#404040">586.72</div><div class="t r " style="right:348px;top:1199.5px;line-height:55px;color:#404040">2 933.60</div><div class="t r " style="right:181px;top:1199.5px;line-height:55px;color:#404040">2 933.60</div><div class="t r gz" style="right:19px;top:1199.5px;line-height:55px;">0</div><div class="a" style="left:562px;top:1260px;width:3278px;height:55px;background:#f5f5f5"></div><div class="a" style="left:500px;top:1260px;width:62px;height:55px;background:#efefef"></div><div class="a" style="left:562px;top:1312px;width:3278px;height:3px;background:#e6e6e6"></div><div class="a" style="left:500px;top:1312px;width:62px;height:3px;background:#e6e6e6"></div><div class="t r " style="right:3292px;top:1254.5px;line-height:55px;color:#404040">10</div><div class="t " style="left:577px;top:1254.5px;line-height:55px;color:#404040;letter-spacing:0.097px">094 Tech-fibrinogen test (100 ODA)</div><div class="t " style="left:1440px;top:1254.5px;line-height:55px;color:#404040">Technology Standard</div><div class="t r " style="right:2027px;top:1254.5px;line-height:55px;color:#404040">5.00</div><div class="t r gz" style="right:1946px;top:1254.5px;line-height:55px;">0</div><div class="t r " style="right:1830px;top:1254.5px;line-height:55px;color:#404040">15.00</div><div class="t r " style="right:1605px;top:1254.5px;line-height:55px;color:#404040">1 349.37</div><div class="t r " style="right:1453px;top:1254.5px;line-height:55px;color:#404040">6 746.85</div><div class="t " style="left:2418px;top:1254.5px;line-height:55px;color:#404040">RUB</div><div class="t r " style="right:1196px;top:1254.5px;line-height:55px;color:#404040">1 349.37</div><div class="t r " style="right:1030px;top:1254.5px;line-height:55px;color:#404040">1 349.37</div><div class="t r " style="right:819px;top:1254.5px;line-height:55px;color:#404040">2 386.00</div><div class="t r " style="right:667px;top:1254.5px;line-height:55px;color:#404040">1 036.63</div><div class="t r " style="right:515px;top:1254.5px;line-height:55px;color:#404040">1 036.63</div><div class="t r " style="right:348px;top:1254.5px;line-height:55px;color:#404040">5 183.15</div><div class="t r " style="right:181px;top:1254.5px;line-height:55px;color:#404040">5 183.15</div><div class="t r gz" style="right:19px;top:1254.5px;line-height:55px;">0</div><div class="a" style="left:559px;top:764px;width:3px;height:551px;background:#e6e6e6"></div><div class="a" style="left:1423px;top:764px;width:2px;height:1059px;background:#cbcbcb"></div><div class="t r " style="right:348px;top:1309.5px;line-height:55px;color:#404040">51 627.48</div><div class="t r " style="right:181px;top:1309.5px;line-height:55px;color:#404040">45 805.39</div><div class="t r rd" style="right:19px;top:1309.5px;line-height:55px;">-5 822.09</div><div class="a" style="left:500px;top:1822px;width:3340px;height:62px;background:#efefef"></div><div class="a" style="left:500px;top:1822px;width:3340px;height:3px;background:#d0d0d0"></div><svg class="a" style="left:514px;top:1839px" width="30" height="34" viewBox="0 0 30 34"><defs><linearGradient id="pg" x1="0" y1="0" x2="1" y2="1"><stop offset="0" stop-color="#c9d9f6"/><stop offset="0.55" stop-color="#a9c2f0"/><stop offset="1" stop-color="#7f9fdc"/></linearGradient></defs><rect x="1.5" y="2" width="7.2" height="29.4" fill="url(#pg)" stroke="#8fa9d8" stroke-width="0.8"/><path d="M26 1.7 L26 29.2 L11.5 15.5 Z" fill="url(#pg)" stroke="#8fa9d8" stroke-width="0.8"/></svg><svg class="a" style="left:571px;top:1839px" width="20" height="34" viewBox="0 0 20 34"><defs><linearGradient id="pg" x1="0" y1="0" x2="1" y2="1"><stop offset="0" stop-color="#c9d9f6"/><stop offset="0.55" stop-color="#a9c2f0"/><stop offset="1" stop-color="#7f9fdc"/></linearGradient></defs><path d="M16.7 1.7 L16.7 29.2 L1.3 15.5 Z" fill="url(#pg)" stroke="#8fa9d8" stroke-width="0.8"/></svg><div class="a" style="left:615px;top:1840px;width:2px;height:33px;background:#cfcfcf"></div><div class="t " style="left:638px;top:1828.5px;line-height:55px;">Page</div><div class="a" style="left:723px;top:1831px;width:125px;height:47px;background:#fff;border:2px solid #cfcfcf"></div><div class="t " style="left:732px;top:1825.5px;line-height:55px;">1</div><div class="t " style="left:862px;top:1828.5px;line-height:55px;">of 1</div><div class="a" style="left:931px;top:1840px;width:2px;height:33px;background:#cfcfcf"></div><svg class="a" style="left:956px;top:1839px" width="20" height="34" viewBox="0 0 20 34"><defs><linearGradient id="pg" x1="0" y1="0" x2="1" y2="1"><stop offset="0" stop-color="#c9d9f6"/><stop offset="0.55" stop-color="#a9c2f0"/><stop offset="1" stop-color="#7f9fdc"/></linearGradient></defs><path d="M1.7 1.7 L1.7 29.2 L16.5 15.5 Z" fill="url(#pg)" stroke="#8fa9d8" stroke-width="0.8"/></svg><svg class="a" style="left:1006px;top:1839px" width="30" height="34" viewBox="0 0 30 34"><defs><linearGradient id="pg" x1="0" y1="0" x2="1" y2="1"><stop offset="0" stop-color="#c9d9f6"/><stop offset="0.55" stop-color="#a9c2f0"/><stop offset="1" stop-color="#7f9fdc"/></linearGradient></defs><path d="M1.7 1.7 L1.7 29.2 L16.5 15.5 Z" fill="url(#pg)" stroke="#8fa9d8" stroke-width="0.8"/><rect x="19" y="2" width="7" height="29.4" fill="url(#pg)" stroke="#8fa9d8" stroke-width="0.8"/></svg><div class="a" style="left:1053px;top:1840px;width:2px;height:33px;background:#cfcfcf"></div><svg class="a" style="left:1068px;top:1836px" width="40" height="40" viewBox="0 0 40 40">
<defs><linearGradient id="rf" x1="0" y1="0" x2="1" y2="1"><stop offset="0" stop-color="#3d95f0"/><stop offset="0.5" stop-color="#74b8fb"/><stop offset="1" stop-color="#2d86e8"/></linearGradient></defs>
<path d="M6 11 C9 3 22 1 28 9 L25 11.5 L37 11 L37 23 L33.5 20 L22 21 L25.5 17.5 C22 10 13 9 9.5 13 Z" fill="url(#rf)" stroke="#2a78d0" stroke-width="1"/>
<path d="M34 30 C30 38 17 39 11 31.5 L14 29 L2 29.5 L2 17.5 L5.5 20.5 L17 19.5 L13.5 23 C17 30 26 31 29.5 27 Z" fill="url(#rf)" stroke="#2a78d0" stroke-width="1"/>
</svg><div class="a" style="left:1120px;top:1840px;width:2px;height:33px;background:#cfcfcf"></div><svg class="a" style="left:1134px;top:1839px" width="42" height="34" viewBox="0 0 42 34">
<defs><linearGradient id="xl" x1="0" y1="0" x2="1" y2="1"><stop offset="0" stop-color="#b8f59a"/><stop offset="0.5" stop-color="#5fd23a"/><stop offset="1" stop-color="#2a9a10"/></linearGradient></defs>
<path d="M2 2 H15 L40 32 H27 Z" fill="url(#xl)" stroke="#3a9a25" stroke-width="0.8"/>
<path d="M23 2 H36 L15 28 H4 Z" fill="#39a81c" stroke="#2f8f18" stroke-width="0.8"/>
<path d="M2 2 H15 L27 16.5 L21 23 Z" fill="url(#xl)"/>
</svg><div class="t r " style="right:27px;top:1828.5px;line-height:55px;">Displaying 1 - 10 of 10</div><div class="a" style="left:2473px;top:771px;width:535px;height:123px;background:#737373"></div><div class="a" style="left:2728.5px;top:761px;width:0;height:0;border-left:12px solid transparent;border-right:12px solid transparent;border-bottom:10.5px solid #737373"></div><div class="t" style="left:2490px;top:785px;line-height:32px;color:#f2f2f2;font-size:27px">Purchase's price, converted to RUB using</div><div class="t" style="left:2490px;top:817px;line-height:32px;color:#f2f2f2;font-size:27px">State Bank rate on current date or on</div><div class="t" style="left:2490px;top:849px;line-height:32px;color:#f2f2f2;font-size:27px">client's request purchase date</div></body></html>
